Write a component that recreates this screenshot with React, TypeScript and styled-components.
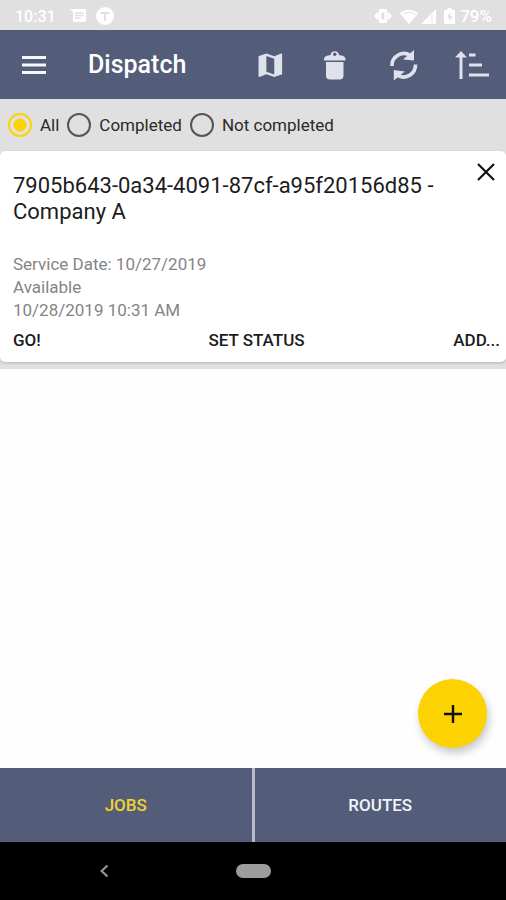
import React, { useState } from "react";
import styled, { createGlobalStyle } from "styled-components";

const color = {
  slate: "#535c78",
  grey: "#e0e0e0",
  yellow: "#fdd203",
  ink: "#1c1c1e",
  muted: "#858585",
  icon: "#dfe2ec",
};

const GlobalStyle = createGlobalStyle`
  *, *::before, *::after { box-sizing: border-box; }
  body { margin: 0; background: #fefefe; font-family: Roboto, "Liberation Sans", sans-serif; }
  button, input { font: inherit; margin: 0; }
  h1, h2, p { margin: 0; }
`;

const Screen = styled.div`
  display: flex;
  flex-direction: column;
  min-height: 100vh;
`;

const StatusBar = styled.div`
  display: flex;
  align-items: center;
  justify-content: space-between;
  height: 30px;
  padding: 2px 14px 0 15px;
  background: ${color.grey};
  color: #fff;
  font-size: 16px;
  font-weight: 500;
`;

const StatusGroup = styled.div<{ $gap: number }>`
  display: flex;
  align-items: center;
  gap: ${(p) => p.$gap}px;
`;

const Battery = styled.span`
  font-size: 17px;
`;

const Icon = styled.svg`
  display: block;
  flex: none;
`;

const AppBar = styled.header`
  display: flex;
  align-items: center;
  height: 69px;
  background: ${color.slate};
  color: ${color.icon};
`;

const BarButton = styled.button`
  display: flex;
  align-items: center;
  justify-content: center;
  width: 68px;
  height: 68px;
  padding: 0;
  border: 0;
  background: none;
  color: inherit;
  cursor: pointer;
`;

const BarTitle = styled.h1`
  flex: 1;
  padding-left: 20px;
  color: #fff;
  font-size: 25px;
  font-weight: 500;
  line-height: 32px;
`;

const Filters = styled.div`
  display: flex;
  align-items: center;
  gap: 8px;
  height: 52px;
  padding: 0 8px;
  background: ${color.grey};
`;

const FilterLabel = styled.label`
  display: flex;
  align-items: center;
  gap: 8px;
  color: #2a2a2a;
  font-size: 17px;
  line-height: 24px;
  cursor: pointer;
`;

const Radio = styled.input`
  appearance: none;
  width: 24px;
  height: 24px;
  border: 2px solid #555;
  border-radius: 50%;
  &:checked {
    border-color: ${color.yellow};
    background: radial-gradient(circle, ${color.yellow} 0 6px, transparent 7px);
  }
`;

const Main = styled.main`
  position: relative;
  flex: 1;
`;

const JobList = styled.div`
  padding-bottom: 7px;
  background: ${color.grey};
`;

const Card = styled.article`
  padding-bottom: 10px;
  border-radius: 5px;
  background: #fff;
  box-shadow: 0 1px 3px rgba(0, 0, 0, 0.2);
`;

const CardHead = styled.div`
  display: flex;
  align-items: flex-start;
  padding-left: 13px;
`;

const CardTitle = styled.h2`
  flex: 1;
  padding-top: 22px;
  color: ${color.ink};
  font-size: 22px;
  font-weight: 400;
  line-height: 26px;
`;

const CloseButton = styled.button`
  display: flex;
  align-items: center;
  justify-content: center;
  width: 41px;
  height: 42px;
  padding: 0;
  border: 0;
  background: none;
  color: #111;
  cursor: pointer;
`;

const Details = styled.div`
  padding: 28px 13px 6px;
  color: ${color.muted};
  font-size: 17px;
  line-height: 23px;
`;

const Actions = styled.div`
  display: grid;
  grid-template-columns: 1fr auto 1fr;
  padding: 0 6px 0 13px;
`;

const TextButton = styled.button<{ $align?: "start" | "end" }>`
  justify-self: ${(p) => p.$align ?? "center"};
  padding: 0;
  border: 0;
  background: none;
  color: ${color.ink};
  font-size: 17px;
  font-weight: 500;
  line-height: 24px;
  cursor: pointer;
`;

const Fab = styled.button`
  position: absolute;
  right: 19px;
  bottom: 20px;
  display: flex;
  align-items: center;
  justify-content: center;
  width: 69px;
  height: 69px;
  padding: 0;
  border: 0;
  border-radius: 50%;
  background: ${color.yellow};
  color: #111;
  box-shadow: 2px 5px 8px rgba(0, 0, 0, 0.22);
  cursor: pointer;
`;

const Tabs = styled.nav`
  display: flex;
  gap: 3px;
  background: #b9bcc6;
`;

const Tab = styled.button<{ $active: boolean }>`
  flex: 1;
  height: 74px;
  padding: 0;
  border: 0;
  background: ${color.slate};
  color: ${(p) => (p.$active ? "#f2d230" : "#f0f3fb")};
  font-size: 17px;
  font-weight: 500;
  cursor: pointer;
`;

const SystemNav = styled.div`
  display: grid;
  grid-template-columns: 1fr auto 1fr;
  align-items: center;
  height: 58px;
  background: #000;
  color: #9c9c9c;
`;

const BackButton = styled.button`
  justify-self: center;
  margin-right: 28px;
  padding: 8px;
  border: 0;
  background: none;
  color: inherit;
`;

const HomePill = styled.button`
  width: 35px;
  height: 14px;
  padding: 0;
  border: 0;
  border-radius: 7px;
  background: #9c9c9c;
`;

const MessageIcon = () => (
  <Icon width="17" height="14" viewBox="0 0 17 14" fill="none">
    <path d="M0 0h15a1 1 0 0 1 1 1v11a1 1 0 0 1-1 1H4a1 1 0 0 1-1-1V3z" fill="#fff" />
    <path d="M5 4h8.500M5 6.500h8.500M5 9h5.500" stroke={color.grey} strokeWidth="1.300" />
  </Icon>
);

const BadgeIcon = () => (
  <Icon width="18" height="18" viewBox="0 0 18 18" fill="none">
    <circle cx="9" cy="9" r="9" fill="#fff" />
    <path d="M4.500 6h9M9 6v8" stroke={color.grey} strokeWidth="2" />
  </Icon>
);

const VibrateIcon = () => (
  <Icon width="18" height="14" viewBox="0 0 18 14">
    <path d="M6 0h6a1 1 0 0 1 1 1v12a1 1 0 0 1-1 1H6a1 1 0 0 1-1-1V1a1 1 0 0 1 1-1z" fill="#fff" />
    <path d="M4.500 2v10L0 7zM13.500 2v10L18 7z" fill="#fff" />
    <path d="M7.500 3.500h3v7h-3z" fill={color.grey} />
  </Icon>
);

const WifiIcon = () => (
  <Icon width="18" height="15" viewBox="0 0 18 15" fill="none">
    <path d="M0 4.500C5-.5 13-.5 18 4.500L9 15z" fill="#fff" />
    <path d="M2.500 5.500c4-3 9-3 13 0" stroke={color.grey} strokeWidth="1" />
  </Icon>
);

const SignalIcon = () => (
  <Icon width="15" height="15" viewBox="0 0 15 15">
    <path d="M15 0v15H0z" fill="#fff" />
    <path d="M11 4.500v10" stroke={color.grey} strokeWidth="0.800" />
  </Icon>
);

const BatteryIcon = () => (
  <Icon width="11" height="16" viewBox="0 0 11 16">
    <path d="M3.500 0h4v2H10a1 1 0 0 1 1 1v12a1 1 0 0 1-1 1H1a1 1 0 0 1-1-1V3a1 1 0 0 1 1-1h2.500z" fill="#fff" />
    <path d="M6.500 4L3 9.500h2.200V14L8.500 8H6.300z" fill={color.grey} />
  </Icon>
);

const MenuIcon = () => (
  <Icon width="24" height="20" viewBox="0 0 24 20" fill="none" stroke="#f5f7fc" strokeWidth="2.800">
    <path d="M0 2.500h24M0 10h24M0 17.500h24" />
  </Icon>
);

const MapIcon = () => (
  <Icon width="40" height="40" viewBox="0 0 40 40" fill="currentColor">
    <path
      transform="translate(6.600 4.500) scale(1.310)"
      d="M20.500 3l-.16.030L15 5.100 9 3 3.360 4.900c-.21.070-.36.250-.36.480V20.500c0 .28.220.5.500.5l.16-.03L9 18.900l6 2.100 5.640-1.900c.21-.07.360-.25.360-.48V3.500c0-.28-.22-.5-.5-.5zM15 19l-6-2.110V5l6 2.110V19z"
    />
  </Icon>
);

const TrashIcon = () => (
  <Icon width="40" height="40" viewBox="0 0 40 40" fill="currentColor">
    <path d="M10 17h17.500v13.500a4 4 0 0 1-4 4h-9.500a4 4 0 0 1-4-4z" />
    <path d="M8 15.500v-1.500c0-2.500 3-3.500 6.500-4a4.300 4.300 0 0 1 8.500 0c3.500.500 6.500 1.500 6.500 4v1.500z" />
    <circle cx="18.750" cy="9.300" r="1.700" fill={color.slate} />
  </Icon>
);

const SyncIcon = () => (
  <Icon width="40" height="40" viewBox="0 0 40 40" fill="none">
    <path d="M8 21A12 12 0 0 1 26.500 10.500" stroke="currentColor" strokeWidth="3.600" />
    <path d="M31.500 19.500A12 12 0 0 1 13 30" stroke="currentColor" strokeWidth="3.600" />
    <path d="M30 5v10.500l-11-1zM9.800 35.500V25l11 1.500z" fill="currentColor" />
  </Icon>
);

const SortIcon = () => (
  <Icon width="40" height="40" viewBox="0 0 40 40" fill="none" stroke="currentColor" strokeWidth="3">
    <path d="M9 34V10M17 10h6.500M17 20h13M17 30h20" />
    <path d="M9 6l6 6.500H3z" fill="currentColor" stroke="none" />
  </Icon>
);

const CrossIcon = () => (
  <Icon width="18" height="18" viewBox="0 0 18 18" fill="none" stroke="currentColor" strokeWidth="2.200">
    <path d="M1 1l16 16M17 1L1 17" />
  </Icon>
);

const PlusIcon = () => (
  <Icon width="18" height="18" viewBox="0 0 18 18" fill="none" stroke="currentColor" strokeWidth="2.400">
    <path d="M9 0v18M0 9h18" />
  </Icon>
);

const BackIcon = () => (
  <Icon width="10" height="14" viewBox="0 0 10 14" fill="none" stroke="currentColor" strokeWidth="2">
    <path d="M8.500 1.500L2.500 7l6 5.500" />
  </Icon>
);

const filters = ["All", "Completed", "Not completed"];
const tabs = ["JOBS", "ROUTES"];

export default function App() {
  const [filter, setFilter] = useState(filters[0]);
  const [tab, setTab] = useState(tabs[0]);

  return (
    <Screen>
      <GlobalStyle />
      <StatusBar>
        <StatusGroup $gap={14}>
          <span>10:31</span>
          <StatusGroup $gap={9}>
            <MessageIcon />
            <BadgeIcon />
          </StatusGroup>
        </StatusGroup>
        <StatusGroup $gap={5}>
          <StatusGroup $gap={8}>
            <VibrateIcon />
            <StatusGroup $gap={3}>
              <WifiIcon />
              <SignalIcon />
            </StatusGroup>
            <BatteryIcon />
          </StatusGroup>
          <Battery>79%</Battery>
        </StatusGroup>
      </StatusBar>

      <AppBar>
        <BarButton aria-label="Menu"><MenuIcon /></BarButton>
        <BarTitle>Dispatch</BarTitle>
        <BarButton aria-label="Map"><MapIcon /></BarButton>
        <BarButton aria-label="Delete"><TrashIcon /></BarButton>
        <BarButton aria-label="Refresh"><SyncIcon /></BarButton>
        <BarButton aria-label="Sort"><SortIcon /></BarButton>
      </AppBar>

      <Filters role="radiogroup" aria-label="Job filter">
        {filters.map((name) => (
          <FilterLabel key={name}>
            <Radio
              type="radio"
              name="filter"
              checked={filter === name}
              onChange={() => setFilter(name)}
            />
            {name}
          </FilterLabel>
        ))}
      </Filters>

      <Main>
        <JobList>
          <Card>
            <CardHead>
              <CardTitle>7905b643-0a34-4091-87cf-a95f20156d85 - Company A</CardTitle>
              <CloseButton aria-label="Close"><CrossIcon /></CloseButton>
            </CardHead>
            <Details>
              <p>Service Date: 10/27/2019</p>
              <p>Available</p>
              <p>10/28/2019 10:31 AM</p>
            </Details>
            <Actions>
              <TextButton $align="start">GO!</TextButton>
              <TextButton>SET STATUS</TextButton>
              <TextButton $align="end">ADD...</TextButton>
            </Actions>
          </Card>
        </JobList>
        <Fab aria-label="Add job"><PlusIcon /></Fab>
      </Main>

      <Tabs>
        {tabs.map((name) => (
          <Tab key={name} $active={tab === name} onClick={() => setTab(name)}>
            {name}
          </Tab>
        ))}
      </Tabs>

      <SystemNav>
        <BackButton aria-label="Back"><BackIcon /></BackButton>
        <HomePill aria-label="Home" />
      </SystemNav>
    </Screen>
  );
}
